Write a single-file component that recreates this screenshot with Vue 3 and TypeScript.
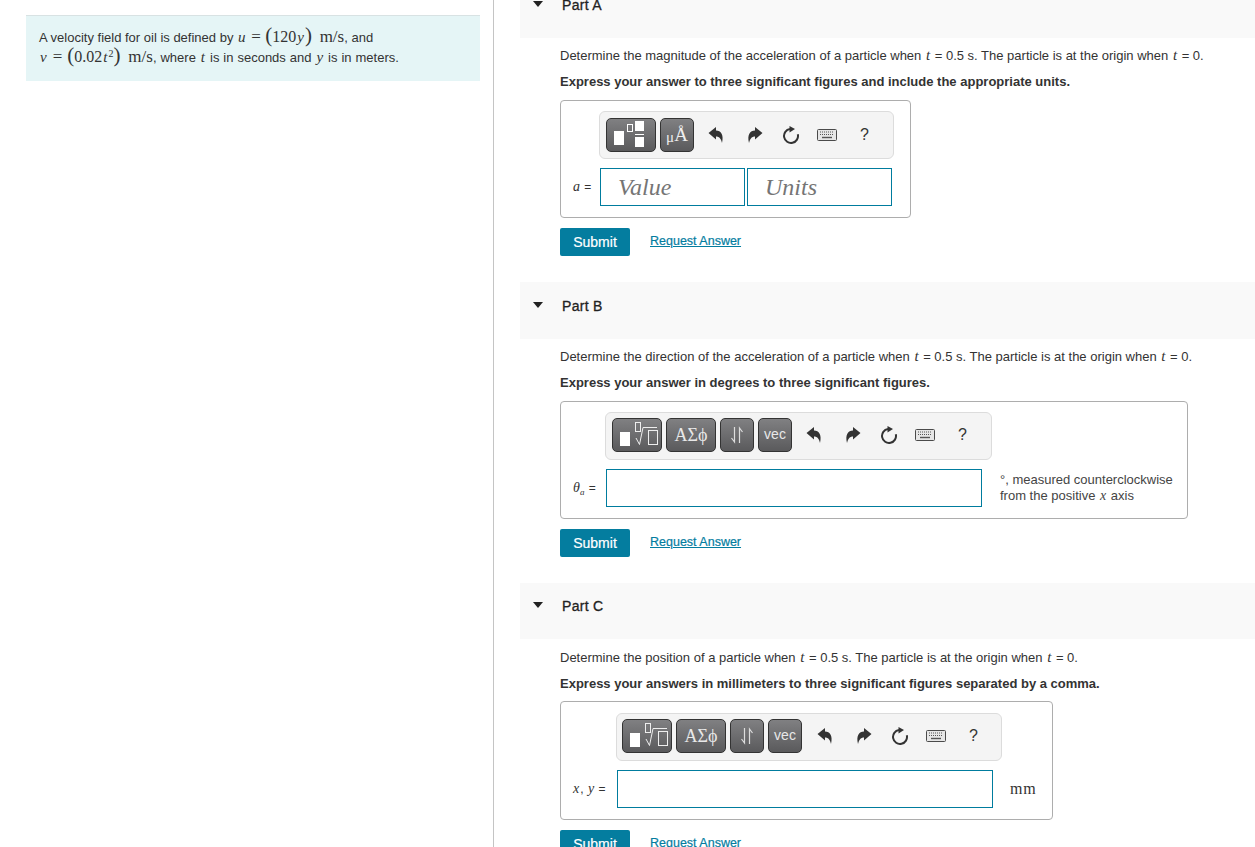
<script setup lang="ts">
interface Part {
  name: string;
  kind: "a" | "b" | "c";
  instruction: string;
}
const parts: Part[] = [
  { name: "Part A", kind: "a", instruction: "Express your answer to three significant figures and include the appropriate units." },
  { name: "Part B", kind: "b", instruction: "Express your answer in degrees to three significant figures." },
  { name: "Part C", kind: "c", instruction: "Express your answers in millimeters to three significant figures separated by a comma." },
];
const prompts: Record<string, string> = {
  a: "Determine the magnitude of the acceleration of a particle when",
  b: "Determine the direction of the acceleration of a particle when",
  c: "Determine the position of a particle when",
};
</script>

<template>
  <div class="page">
    <aside class="left">
      <div class="callout">
        <div class="line">A velocity field for oil is defined by <i class="m">u</i> <span class="r eq">=</span> <span class="r big">(</span><span class="r">120</span><i class="m">y</i><span class="r big">)</span> <span class="r unit">m/s</span>, and</div>
        <div class="line line2"><i class="m">v</i> <span class="r eq">=</span> <span class="r big">(</span><span class="r">0.02</span><i class="m">t</i><sup class="r sup">2</sup><span class="r big">)</span> <span class="r unit">m/s</span>, where <i class="m">t</i> is in seconds and <i class="m">y</i> is in meters.</div>
      </div>
    </aside>
    <main class="right">
      <section v-for="p in parts" :key="p.name" class="part" :class="'part-' + p.kind">
        <header class="head">
          <span class="caret"></span>
          <span class="title">{{ p.name }}</span>
        </header>
        <p class="prompt">{{ prompts[p.kind] }} <i class="m">t</i> = 0.5 s. The particle is at the origin when <i class="m">t</i> = 0.</p>
        <p class="instruction">{{ p.instruction }}</p>
        <div class="box">
          <div class="toolbar">
            <template v-if="p.kind === 'a'">
              <button class="tb wide">
                <svg width="48" height="32" viewBox="0 0 48 32">
                  <rect x="7" y="12" width="10" height="14" fill="#fff" />
                  <rect x="20.5" y="5.5" width="5" height="7" fill="none" stroke="#fff" />
                  <rect x="28" y="2" width="9" height="10" fill="#fff" />
                  <rect x="28" y="15" width="9" height="1" fill="#fff" />
                  <rect x="28" y="18" width="9" height="10" fill="#fff" />
                </svg>
              </button>
              <button class="tb narrow unitbtn"><span class="mu">μ</span>Å</button>
            </template>
            <template v-else>
              <button class="tb wide">
                <svg width="48" height="32" viewBox="0 0 48 32">
                  <rect x="7" y="13" width="10" height="14" fill="#fff" />
                  <rect x="22.5" y="3.5" width="5" height="9" fill="none" stroke="#eee" />
                  <path d="M23 19 L26.5 25.5 L30 8.5 H44" fill="none" stroke="#eee" stroke-width="1" />
                  <rect x="35.5" y="11.5" width="9" height="14" fill="none" stroke="#eee" />
                </svg>
              </button>
              <button class="tb wide greek">ΑΣϕ</button>
              <button class="tb narrow">
                <svg width="20" height="20" viewBox="0 0 20 20">
                  <path d="M7.5 2 V17 L4.5 13 M12.5 18 V3 L15.5 7" fill="none" stroke="#ddd" stroke-width="1.2" />
                </svg>
              </button>
              <button class="tb narrow vec">vec</button>
            </template>
            <div class="tools">
              <svg class="ic" width="16" height="16" viewBox="0 0 16 16"><path d="M0.5 6 L8 0 V3.6 C13 3.6 16 8 14 16 C13 11.5 11 9.5 8 9.5 V12.5 Z" fill="#333" /></svg>
              <svg class="ic" width="16" height="16" viewBox="0 0 16 16"><path d="M15.5 6 L8 0 V3.6 C3 3.6 0 8 2 16 C3 11.5 5 9.5 8 9.5 V12.5 Z" fill="#333" /></svg>
              <svg class="ic" width="18" height="18" viewBox="0 0 18 18"><path d="M8 3 A7 7 0 1 0 15.8 8.2" fill="none" stroke="#333" stroke-width="2" /><path d="M7.5 0 L13 3 L7.5 6.5 Z" fill="#333" /></svg>
              <svg class="ic" width="20" height="12" viewBox="0 0 20 12"><rect x=".5" y=".5" width="19" height="11" rx="1" fill="#e6e6e6" stroke="#4a4a4a" /><path d="M3 3 H17 M3 5.5 H17" stroke="#555" stroke-width="1.2" stroke-dasharray="1 1" /><path d="M5 8.5 H15" stroke="#555" stroke-width="1.4" /></svg>
              <span class="help">?</span>
            </div>
          </div>
          <div class="row">
            <template v-if="p.kind === 'a'">
              <label class="lbl"><i class="m">a</i> =</label>
              <input class="field half" placeholder="Value" aria-label="Value" />
              <input class="field half" placeholder="Units" aria-label="Units" />
            </template>
            <template v-else-if="p.kind === 'b'">
              <label class="lbl"><i class="m">θ<sub>a</sub></i> =</label>
              <input class="field full" aria-label="Angle" />
              <div class="after">
                <div>°, measured counterclockwise</div>
                <div>from the positive <i class="m">x</i> axis</div>
              </div>
            </template>
            <template v-else>
              <label class="lbl"><i class="m">x</i>, <i class="m">y</i> =</label>
              <input class="field full" aria-label="Position" />
              <span class="mm">mm</span>
            </template>
          </div>
        </div>
        <div class="actions">
          <button class="submit">Submit</button>
          <a class="req">Request Answer</a>
        </div>
      </section>
    </main>
  </div>
</template>

<style>
html, body { margin: 0; height: 847px; overflow: hidden; background: #fff; }
</style>

<style scoped>
.page {
  display: flex;
  height: 847px;
  overflow: hidden;
  font-family: "Liberation Sans", Arial, sans-serif;
  font-size: 13px;
  color: #333;
}
.left {
  width: 493px;
  flex: none;
  border-right: 1px solid #c4c4c4;
  padding-top: 15px;
}
.callout {
  margin-left: 26px;
  width: 454px;
  height: 66px;
  box-sizing: border-box;
  background: #e5f5f6;
  border-top: 1px solid #d8e2e3;
  padding: 12px 13px;
  color: #333;
}
.line { height: 20px; line-height: 20px; white-space: nowrap; }
.line2 { word-spacing: .35px; }
.m { font-family: "Liberation Serif", serif; font-style: italic; font-size: 15px; padding: 0 1px; line-height: 0; }
.r { font-family: "Liberation Serif", serif; font-size: 16px; line-height: 0; }
.eq { font-size: 17px; margin: 0 1px; }
.big { font-size: 21px; }
.unit { margin-left: 4px; font-size: 17px; }
.sup { font-size: 10px; }
.right { flex: 1; margin-top: -19px; padding-left: 26px; min-width: 0; }
.part { padding-bottom: 26px; }
.head {
  height: 57px;
  background: #f9f9f9;
  display: flex;
  align-items: flex-start;
  padding-top: 16px;
  box-sizing: border-box;
}
.part-c .head { height: 56px; padding-top: 15px; }
.part-c .prompt { margin-top: 11px; }
.caret {
  width: 0;
  height: 0;
  margin: 4px 0 0 13px;
  border-left: 5.5px solid transparent;
  border-right: 5.5px solid transparent;
  border-top: 6px solid #222;
}
.title { margin-left: 19px; font-size: 14px; letter-spacing: .3px; font-weight: 400; line-height: 16px; color: #222; -webkit-text-stroke: .3px #222; }
.prompt {
  margin: 10px 0 0 40px;
  line-height: 16px;
  height: 16px;
  white-space: nowrap;
  font-size: 13px;
  color: #333;
}
.instruction {
  margin: 10px 0 0 40px;
  line-height: 16px;
  height: 16px;
  font-size: 13px;
  font-weight: 700;
  white-space: nowrap;
  color: #333;
}
.box {
  margin: 10px 0 0 40px;
  border: 1px solid #adadad;
  border-radius: 4px;
  box-sizing: border-box;
  padding: 10px 0 0;
  height: 118px;
}
.part-a .box { width: 351px; }
.part-b .box { width: 628px; }
.part-c .box { width: 493px; height: 119px; margin-top: 9px; padding-top: 11px; }
.toolbar {
  height: 48px;
  box-sizing: border-box;
  background: #f4f4f4;
  border: 1px solid #dcdcdc;
  border-radius: 6px;
  display: flex;
  align-items: flex-start;
  padding: 5px 0 0 6px;
  gap: 4px;
}
.part-a .toolbar { width: 295px; margin-left: 38px; padding-top: 6px; }
.part-b .toolbar { width: 387px; margin-left: 44px; }
.part-c .toolbar { width: 386px; margin-left: 55px; padding-left: 5px; }
.part-c .tools { margin-left: 11px; }
.tb {
  height: 34px;
  box-sizing: border-box;
  padding: 0;
  border: 1px solid #333;
  border-radius: 5px;
  background: linear-gradient(#808082, #5a5a5c);
  color: #e8e8e8;
  display: flex;
  align-items: center;
  justify-content: center;
}
.wide { width: 50px; }
.narrow { width: 34px; }
.unitbtn { font-family: "Liberation Serif", serif; font-size: 19px; color: #eee; }
.mu { font-size: 15px; padding-top: 4px; }
.greek { font-family: "Liberation Serif", serif; font-size: 18px; }
.vec { font-size: 14px; padding-bottom: 3px; }
.tools { display: flex; align-items: center; height: 34px; margin-left: 10px; }
.ic { flex: none; }
.tools .ic:nth-child(1) { margin-right: 23px; }
.tools .ic:nth-child(2) { margin-right: 19px; }
.tools .ic:nth-child(3) { margin-right: 17px; }
.tools .ic:nth-child(4) { margin-right: 23px; }
.help { font-size: 16px; color: #333; line-height: 16px; }
.row { display: flex; align-items: center; margin-top: 9px; height: 38px; padding-left: 11px; }
.lbl { font-size: 12px; white-space: nowrap; }
.lbl .m { font-size: 14px; }
.lbl sub { font-size: 9px; line-height: 0; vertical-align: -3px; }
.part-a .lbl { width: 28px; }
.part-b .lbl { width: 34px; }
.part-c .lbl { width: 45px; }
.field {
  height: 38px;
  box-sizing: border-box;
  border: 1px solid #007c9e;
  border-radius: 0;
  outline: none;
  background: #fff;
  padding: 0 17px;
  font-family: "Liberation Serif", serif;
  font-style: italic;
  font-size: 24px;
}
.field::placeholder { color: #757575; opacity: 1; }
.half { width: 145px; margin-right: 2px; }
.full { width: 376px; }
.after { margin-left: 18px; line-height: 16px; white-space: nowrap; font-size: 13px; color: #444; }
.after .m { font-size: 14px; }
.mm { margin-left: 17px; font-family: "Liberation Serif", serif; font-size: 16px; letter-spacing: .7px; }
.actions { display: flex; align-items: flex-start; margin: 10px 0 0 40px; }
.submit {
  width: 70px;
  height: 28px;
  padding: 0;
  border: 0;
  border-radius: 2px;
  background: #047d9f;
  color: #fff;
  font-family: "Liberation Sans", Arial, sans-serif;
  font-size: 14px;
  font-weight: 400;
  -webkit-text-stroke: .2px #fff;
}
.req {
  margin: 5px 0 0 20px;
  color: #047d9f;
  font-size: 12.5px;
  line-height: 16px;
  text-decoration: underline;
  -webkit-text-stroke: .2px #047d9f;
  cursor: pointer;
}
</style>
